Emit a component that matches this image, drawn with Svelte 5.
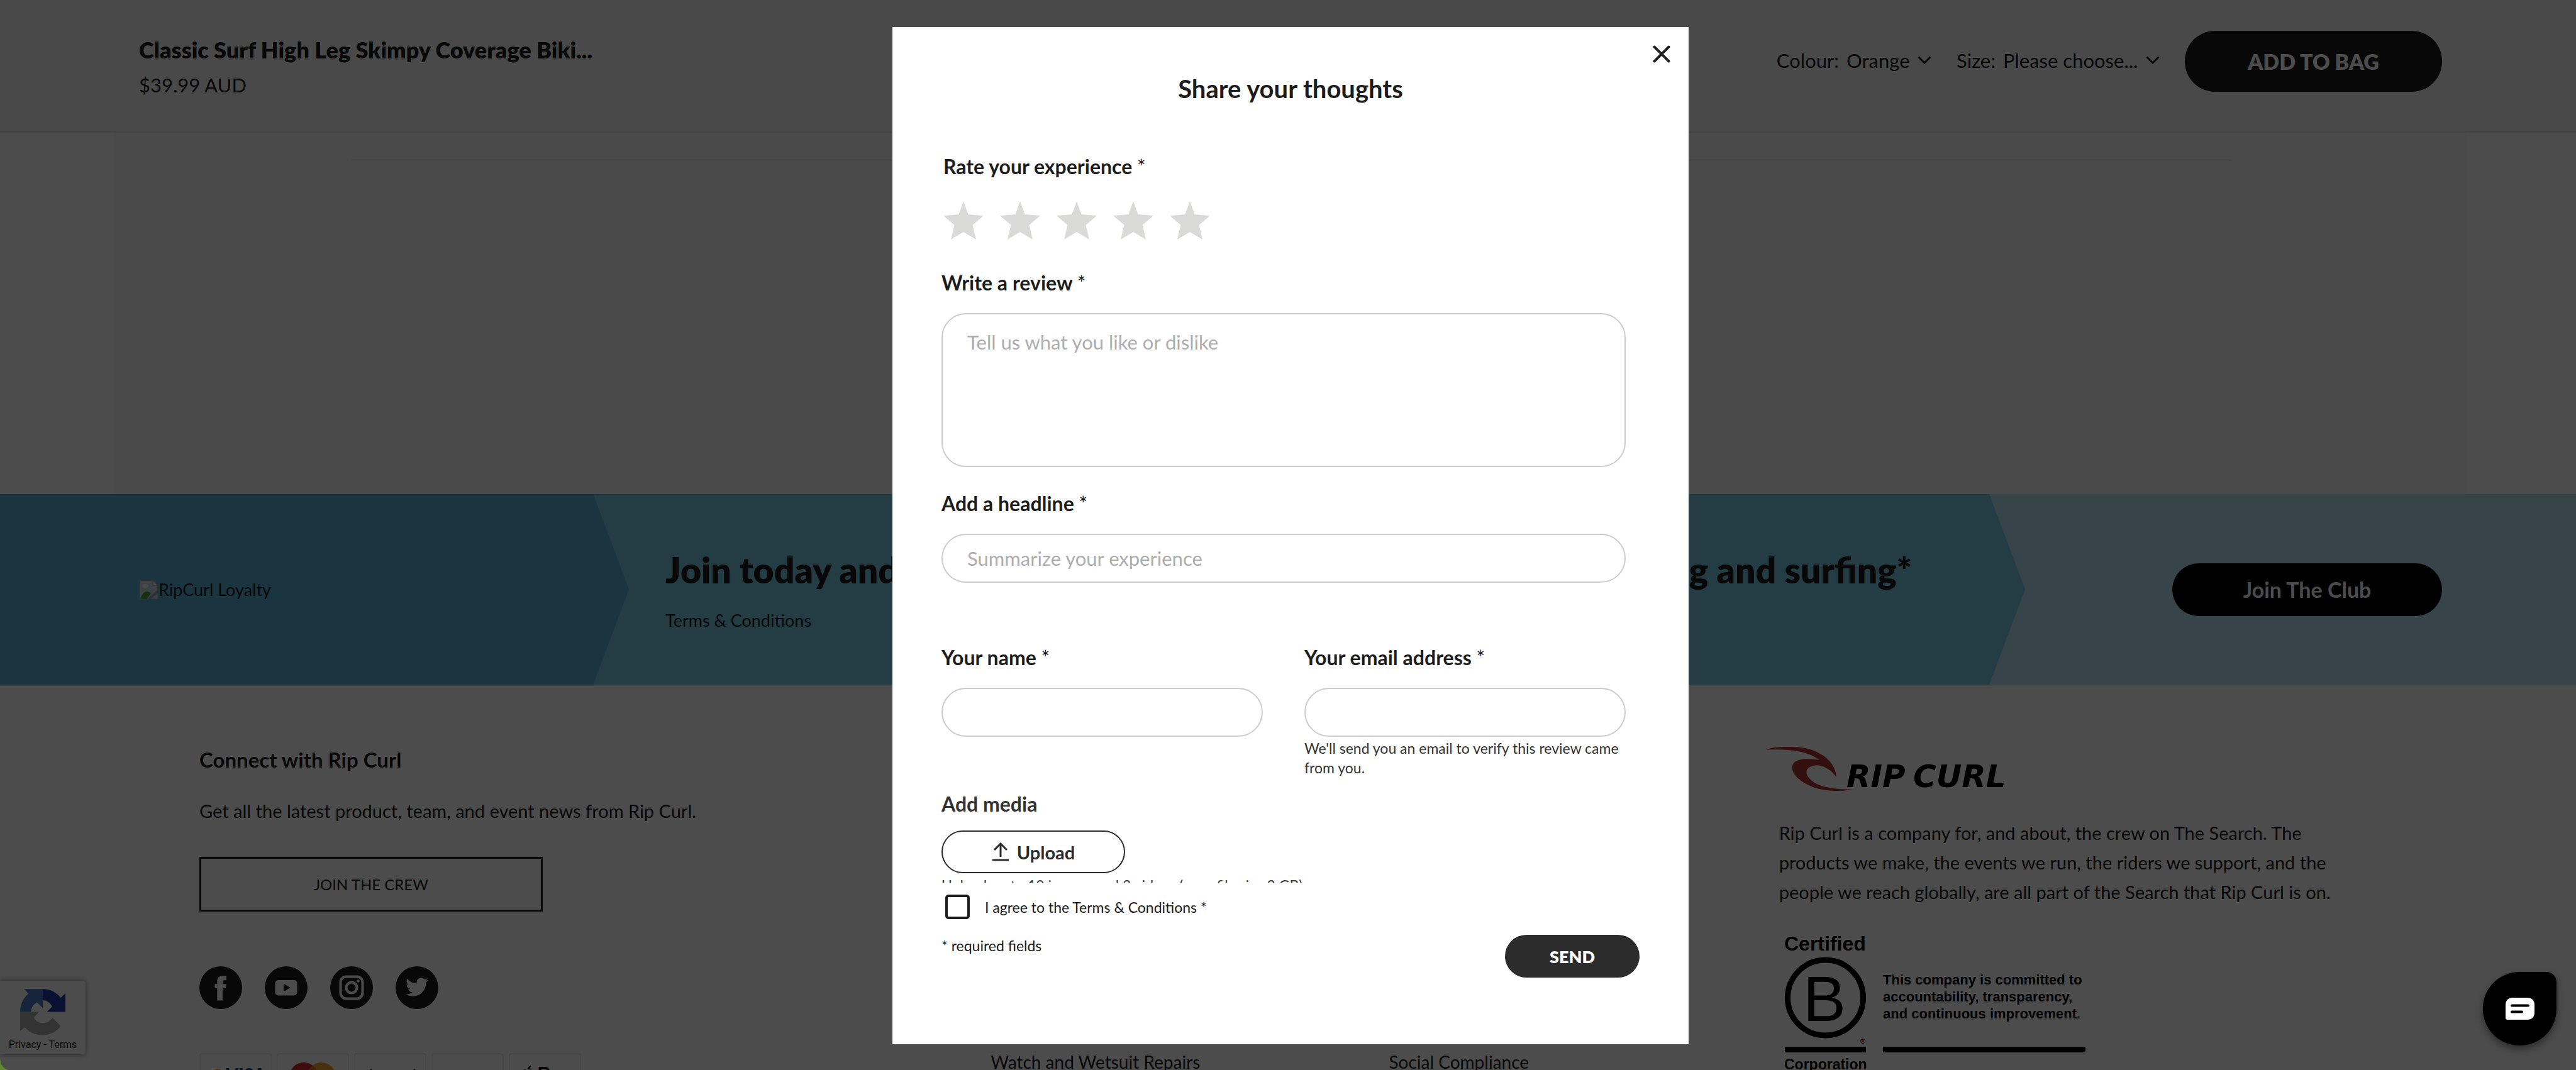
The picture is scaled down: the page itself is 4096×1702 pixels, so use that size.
<script>
  const stars = [1, 2, 3, 4, 5];
  let rating = $state(0);
</script>

<div class="page">
  <header class="product-bar">
    <div class="product">
      <h2>Classic Surf High Leg Skimpy Coverage Biki...</h2>
      <p>$39.99 AUD</p>
    </div>
    <div class="options">
      <div class="option">
        <label for="colour">Colour:</label>
        <select id="colour"><option>Orange</option></select>
        <svg width="22" height="13" viewBox="0 0 22 13" aria-hidden="true"><path d="M1.500 1.500L11 11L20.500 1.500" /></svg>
      </div>
      <div class="option">
        <label for="size">Size:</label>
        <select id="size"><option>Please choose...</option></select>
        <svg width="22" height="13" viewBox="0 0 22 13" aria-hidden="true"><path d="M1.500 1.500L11 11L20.500 1.500" /></svg>
      </div>
      <button class="pill bag" type="button">ADD TO BAG</button>
    </div>
  </header>

  <main class="content"><div class="content-inner"><hr /></div></main>

  <section class="banner">
    <div class="loyalty">
      <svg width="31" height="32" viewBox="0 0 31 32" aria-hidden="true">
        <path d="M1 1H22L30 9V17L14 31H1Z" fill="#c9d8ee" stroke="#a8a8a8" stroke-width="2" />
        <path d="M22 1V9H30Z" fill="#fff" stroke="#a8a8a8" stroke-width="1.500" />
        <ellipse cx="10" cy="10" rx="5" ry="3" fill="#fff" />
        <path d="M2 30C6 20 12 15 19 22L12 31Z" fill="#4da338" />
        <path d="M18 31H30V21Z" fill="#c9d8ee" stroke="#a8a8a8" />
      </svg>
      <span>RipCurl Loyalty</span>
    </div>
    <div class="join">
      <h2><span>Join today and</span><span>skating and surfing*</span></h2>
      <a href="#terms">Terms &amp; Conditions</a>
    </div>
    <div class="club"><button class="pill" type="button">Join The Club</button></div>
  </section>

  <footer class="footer">
    <div class="connect">
      <h3>Connect with Rip Curl</h3>
      <p>Get all the latest product, team, and event news from Rip Curl.</p>
      <button type="button" class="crew">JOIN THE CREW</button>
      <div class="social">
        <a href="#facebook" aria-label="Facebook">
          <svg viewBox="0 0 68 68"><circle cx="34" cy="34" r="34" /><path class="w" d="M28.300 54.500V35H24.500V28.300H28.300V24C28.300 18 32 15.300 37 15.300H43V22.300H39.500C37.500 22.300 37 23 37 25V28.300H43L42 35H37V54.500Z" /></svg>
        </a>
        <a href="#youtube" aria-label="YouTube">
          <svg viewBox="0 0 68 68"><circle cx="34" cy="34" r="34" /><rect class="w" x="16.500" y="22" width="35" height="24.500" rx="5" /><path d="M30 27.500V40.500L40.500 34Z" /></svg>
        </a>
        <a href="#instagram" aria-label="Instagram">
          <svg viewBox="0 0 68 68"><circle cx="34" cy="34" r="34" /><rect class="l" x="16.500" y="16.500" width="35" height="35" rx="9" /><circle class="l" cx="34" cy="34" r="8.500" /><circle class="w" cx="44.500" cy="23.500" r="2.300" /></svg>
        </a>
        <a href="#twitter" aria-label="Twitter">
          <svg viewBox="0 0 68 68"><circle cx="34" cy="34" r="34" /><path class="w" transform="translate(16 15) scale(1.5)" d="M23.953 4.570a10 10 0 01-2.825.775 4.958 4.958 0 002.163-2.723c-.951.555-2.005.959-3.127 1.184a4.920 4.920 0 00-8.384 4.482C7.690 8.095 4.067 6.130 1.640 3.162a4.822 4.822 0 00-.666 2.475c0 1.710.870 3.213 2.188 4.096a4.904 4.904 0 01-2.228-.616v.060a4.923 4.923 0 003.946 4.827 4.996 4.996 0 01-2.212.085 4.936 4.936 0 004.604 3.417 9.867 9.867 0 01-6.102 2.105c-.390 0-.779-.023-1.170-.067a13.995 13.995 0 007.557 2.209c9.053 0 13.998-7.496 13.998-13.985 0-.210 0-.420-.015-.630A9.935 9.935 0 0024 4.590z" /></svg>
        </a>
      </div>
      <div class="payments">
        <svg viewBox="0 0 115 76" role="img" aria-label="Visa"><rect class="card" x="1" y="1" width="113" height="74" rx="3" /><path d="M23 25H33L36 32Z" fill="#f0a52c" /><text x="41" y="46" class="visa">VISA</text></svg>
        <svg viewBox="0 0 115 76" role="img" aria-label="Mastercard"><rect class="card" x="1" y="1" width="113" height="74" rx="3" /><circle cx="71" cy="38" r="23" fill="#f0a52c" /><circle cx="43" cy="38" r="23" fill="#cf2929" /><path d="M57 20A23 23 0 0 1 57 56A23 23 0 0 1 57 20" fill="#e0702a" /></svg>
        <svg viewBox="0 0 115 76" role="img" aria-label="Afterpay"><rect class="card" x="1" y="1" width="113" height="74" rx="3" /><path d="M25 27L27 25L29 27ZM94 27L96 25L98 27Z" fill="#333" /></svg>
        <svg viewBox="0 0 115 76" role="img" aria-label="Zip"><rect class="card" x="1" y="1" width="113" height="74" rx="3" /></svg>
        <svg viewBox="0 0 115 76" role="img" aria-label="Apple Pay"><rect class="card" x="1" y="1" width="113" height="74" rx="3" /><path d="M30 26C30 23 32 21 35 20C35 23 33 26 30 26ZM20 34C20 24 28 26 30 28C33 26 37 26 39 29C33 32 35 39 40 41C37 50 33 48 30 47C26 49 20 45 20 34Z" fill="#000" /><text x="45" y="47" class="apple">Pay</text></svg>
      </div>
    </div>
    <nav class="links" aria-label="Support"><a href="#repairs">Watch and Wetsuit Repairs</a></nav>
    <nav class="links" aria-label="Company"><a href="#social-compliance">Social Compliance</a></nav>
    <div class="about">
      <svg class="logo" width="390" height="70" viewBox="0 0 390 70" role="img" aria-label="Rip Curl">
        <path d="M0 4.500C12 0 24 0 38 0C58 0 74 3 88 12C102 20 111 33 112 48C102 35 88 27 75 30C66 32 62 38 66 46C74 60 96 68 137 67.500C126 70 118 70 108 70C84 69 64 62 51 50C42 42 39 32 44 26C50 18 70 18 85 21C68 8 44 3 0 4.500Z" fill="#b03434" />
        <text x="128" y="64">RIP</text><text x="234" y="64">CURL</text>
      </svg>
      <p>Rip Curl is a company for, and about, the crew on The Search. The products we make, the events we run, the riders we support, and the people we reach globally, are all part of the Search that Rip Curl is on.</p>
      <svg class="bcorp" width="480" height="224" viewBox="0 0 480 224" role="img" aria-label="Certified B Corporation">
        <text x="-1" y="29" font-size="32">Certified</text>
        <circle cx="64.500" cy="104" r="60" />
        <text x="29" y="141" font-size="102" font-weight="400">B</text>
        <text x="120" y="177" font-size="11">®</text>
        <rect x="0" y="182" width="129" height="9" /><rect x="156" y="182" width="322" height="9" />
        <text x="156" y="83" font-size="22">This company is committed to</text>
        <text x="156" y="110" font-size="22">accountability, transparency,</text>
        <text x="156" y="137" font-size="22">and continuous improvement.</text>
        <text x="-1" y="218" font-size="23">Corporation</text>
      </svg>
    </div>
  </footer>

  <aside class="captcha">
    <svg width="72" height="74" viewBox="100 75 220 225" aria-hidden="true">
      <path d="M120 75H210V167L182 140C165 148 153 166 153 186H100C100 150 114 120 140 98Z" fill="#4a78c8" />
      <path d="M210 75C247 75 278 92 298 118L320 95V186H230L256 160C245 140 230 130 210 130Z" fill="#1c3aa9" />
      <path d="M100 186H192L166 214C176 232 192 240 210 240C232 240 248 230 258 215L297 255C276 284 244 299 210 299C174 299 144 286 122 260L100 280Z" fill="#ababab" />
    </svg>
    <span>Privacy - Terms</span>
  </aside>
</div>

<div class="overlay">
  <div class="dialog" role="dialog" aria-modal="true" aria-labelledby="dialog-title">
    <button class="close" type="button" aria-label="Close">
      <svg width="28" height="28" viewBox="0 0 28 28"><path d="M2.500 2.500L25.500 25.500M25.500 2.500L2.500 25.500" /></svg>
    </button>
    <h1 id="dialog-title">Share your thoughts</h1>
    <form>
      <div class="fields">
        <div class="rating" role="group" aria-labelledby="rate">
          <span class="label" id="rate">Rate your experience <i>*</i></span>
          <div class="stars">
            {#each stars as n}
              <button type="button" aria-label="{n} of 5 stars" class:on={n <= rating} onclick={() => (rating = n)}>
                <svg width="64" height="61" viewBox="0 0 64 61"><path d="M32 0L39.500 21L64 23L46.500 38L52 61L32 49L12 61L17.500 38L0 23L24.500 21Z" /></svg>
              </button>
            {/each}
          </div>
        </div>
        <label class="label review-label" for="review">Write a review <i>*</i></label>
        <textarea id="review" placeholder="Tell us what you like or dislike"></textarea>
        <label class="label headline-label" for="headline">Add a headline <i>*</i></label>
        <input id="headline" type="text" placeholder="Summarize your experience" />
        <div class="pair">
          <div>
            <label class="label" for="name">Your name <i>*</i></label>
            <input id="name" type="text" />
          </div>
          <div>
            <label class="label" for="email">Your email address <i>*</i></label>
            <input id="email" type="email" />
            <p class="small">We'll send you an email to verify this review came from you.</p>
          </div>
        </div>
        <span class="label media-label">Add media</span>
        <button class="upload" type="button">
          <svg width="28" height="30" viewBox="0 0 28 30" aria-hidden="true"><path d="M14 23V2M4 12L14 2L24 12M1 28H27" /></svg>
          Upload
        </button>
        <p class="small hint">Upload up to 10 images and 3 videos (max. file size 2 GB)</p>
      </div>
      <div class="actions">
        <label class="agree"><input type="checkbox" /><span>I agree to the Terms &amp; Conditions *</span></label>
        <div class="submit-row">
          <span>* required fields</span>
          <button class="send" type="submit">SEND</button>
        </div>
      </div>
    </form>
  </div>
</div>

<button class="chat" type="button" aria-label="Chat">
  <svg width="46" height="35" viewBox="0 0 46 35"><path d="M12 0H34Q46 0 46 12V23Q46 35 34 35H3Q0 35 0 32V12Q0 0 12 0Z" fill="#fff" /><path d="M10 12.500H36M10 22.500H26" stroke="#000" stroke-width="4" stroke-linecap="round" /></svg>
</button>
<svg class="corner" width="14" height="18" viewBox="0 0 14 18" aria-hidden="true"><path d="M0 0C1 10 5 16 14 18H0Z" fill="#5c8c2e" /></svg>

<style>
  :global(body) { margin: 0; overflow: hidden; font-family: Lato, 'Open Sans', sans-serif; color: #1c1c1c; }
  h1, h2, h3, p { margin: 0; }
  button, input, textarea, select { font-family: inherit; color: inherit; box-sizing: border-box; }
  button { border: 0; padding: 0; background: none; cursor: pointer; }
  a { color: inherit; text-decoration: none; }
  svg { display: block; flex: none; }

  .page { position: relative; isolation: isolate; height: 100vh; overflow: hidden; background: #fff; display: flex; flex-direction: column; }
  .product-bar { flex: none; display: flex; justify-content: space-between; align-items: flex-start; height: 160px; padding: 49px 213px 0 221px; background: #f4f4f4; border-bottom: 2px solid #dcdcdc; }
  .product { padding-top: 8px; display: grid; gap: 14px; }
  .product h2 { font-size: 36px; line-height: 44px; font-weight: 800; }
  .product p { font-size: 31px; line-height: 40px; }
  .options { display: flex; align-items: center; gap: 40px; font-size: 31px; }
  .option { display: flex; align-items: center; gap: 12px; padding-bottom: 4px; }
  .option select { appearance: none; border: 0; padding: 0; background: none; font-size: 31px; line-height: 40px; }
  .option path { fill: none; stroke: #1c1c1c; stroke-width: 3; }
  .pill { width: 429px; height: 84px; border-radius: 42px; background: #000; color: #fff; font-size: 34px; font-weight: 700; }
  .bag { width: 409px; height: 97px; border-radius: 48px; background: #1c1c1c; font-weight: 800; }

  .content { flex: none; height: 575px; padding: 0 174px 0 182px; display: flex; }
  .content-inner { flex: 1; background: #f7f7f7; }
  .content hr { height: 3px; border: 0; margin: 42px 374px 0 376px; background: #eaeaea; }

  .banner { flex: none; height: 303px; display: grid; grid-template-columns: 1000fr 2220fr 876fr; background: #b7e3f3; border-bottom: 2px solid #ededed; }
  .loyalty, .join { clip-path: polygon(0 0, calc(100% - 57px) 0, 100% 50%, calc(100% - 57px) 100%, 0 100%); }
  .loyalty { z-index: 1; display: flex; align-items: center; padding-left: 221px; background: #57b1d3; font-size: 27px; }
  .join { margin-left: -57px; padding: 89px 180px 0 115px; background: #78c8df; display: flex; flex-direction: column; gap: 32px; }
  .join h2 { display: flex; justify-content: space-between; font-size: 57px; line-height: 62px; font-weight: 800; }
  .join a { font-size: 27px; line-height: 36px; }
  .club { display: flex; align-items: center; justify-content: flex-end; padding-right: 213px; }

  .footer { flex: none; display: grid; grid-template-columns: 1258fr 633fr 599fr 1288fr; padding: 97px 0 0 317px; font-size: 29px; line-height: 47px; }
  .footer h3 { font-size: 33px; line-height: 40px; }
  .connect p { margin: 38px 0 50px; }
  .crew { display: block; width: 546px; height: 87px; border: 3px solid #1c1c1c; font-size: 24px; font-weight: 400; }
  .social { display: flex; gap: 36px; margin: 87px 0 70px; }
  .social svg { width: 68px; height: 68px; fill: #1c1c1c; }
  .social .w { fill: #fff; }
  .social .l { fill: none; stroke: #fff; stroke-width: 4; }
  .payments { display: flex; gap: 8px; }
  .payments svg { width: 115px; height: 76px; }
  .card { fill: none; stroke: #dcdcdc; stroke-width: 1; }
  .visa { font: italic 900 30px Lato, sans-serif; fill: #1a3f8f; }
  .apple { font: 500 34px Inter, sans-serif; fill: #000; }
  .links { padding-top: 477px; }
  .links a { font-size: 28px; }
  .logo text { font: italic 700 50px 'DejaVu Sans', sans-serif; }
  .about p { margin: 43px 0 41px 21px; width: 910px; }
  .bcorp { margin-left: 30px; font-family: 'Liberation Sans', sans-serif; font-weight: 700; }
  .bcorp circle { fill: none; stroke: #000; stroke-width: 9; }

  .captcha { position: absolute; left: 0; bottom: 25px; width: 136px; height: 117px; box-sizing: border-box; padding-top: 13px; display: flex; flex-direction: column; align-items: center; gap: 4px; background: #fff; border-radius: 0 4px 4px 0; box-shadow: 0 0 8px #808080; font: 16px/22px Roboto, sans-serif; }

  .overlay { position: fixed; inset: 0; padding: 43px 0 41px 8px; background: rgba(0, 0, 0, 0.7); display: flex; justify-content: center; }
  .dialog { position: relative; width: 1266px; background: #fff; padding-top: 76px; box-sizing: border-box; display: flex; flex-direction: column; }
  .dialog h1 { font-size: 40px; line-height: 44px; text-align: center; }
  .close { position: absolute; top: 13px; right: 13px; width: 60px; height: 60px; display: grid; place-items: center; }
  .close path { fill: none; stroke: #1c1c1c; stroke-width: 4; stroke-linecap: round; }
  form { flex: 1; min-height: 0; display: flex; flex-direction: column; }
  .fields { flex: 1; min-height: 0; overflow: hidden; padding: 84px 100px 0 78px; }
  .label { display: block; font-size: 32px; line-height: 36px; font-weight: 700; }
  .label i { font-style: normal; font-weight: 400; }
  .rating { padding-left: 3px; }
  .stars { display: flex; gap: 26px; margin-top: 37px; }
  .stars path { fill: #dadad8; }
  .stars .on path { fill: #1c1c1c; }
  .review-label { margin: 51px 0 30px; }
  .headline-label { margin: 40px 0 30px; }
  .fields input, .fields textarea { display: block; width: 100%; height: 78px; border: 2px solid #ccc; border-radius: 39px; background: #fff; padding: 0 39px; font-size: 31px; line-height: 36px; outline: 0; }
  .fields textarea { height: 245px; padding: 26px 39px; resize: none; }
  ::placeholder { color: #adadad; opacity: 1; }
  .pair { display: grid; grid-template-columns: 1fr 1fr; gap: 66px; margin-top: 101px; }
  .pair .label { margin-bottom: 30px; }
  .small { font-size: 23px; line-height: 31px; color: #333; }
  .pair .small { margin-top: 3px; }
  .media-label { margin: 24px 0; color: #333; }
  .upload { width: 292px; height: 68px; border: 2px solid #2c2c2c; border-radius: 34px; display: flex; align-items: center; justify-content: center; gap: 12px; font-size: 29px; font-weight: 700; color: #2c2c2c; }
  .upload path { fill: none; stroke: #2c2c2c; stroke-width: 3; }
  .hint { margin-top: 4px; }
  .actions { flex: none; padding: 19px 78px 106px; font-size: 23px; }
  .agree { display: flex; align-items: center; gap: 24px; padding-left: 6px; }
  .agree input { appearance: none; width: 39px; height: 39px; margin: 0; border: 4px solid #1c1c1c; border-radius: 5px; }
  .submit-row { display: flex; justify-content: space-between; align-items: flex-start; margin-top: 25px; line-height: 34px; }
  .send { width: 214px; height: 68px; border-radius: 34px; background: #2c2c2c; color: #fff; font-size: 27px; font-weight: 800; }

  .chat { position: fixed; right: 31px; bottom: 39px; width: 117px; height: 117px; border-radius: 58px 16px 58px 58px; background: #000; display: grid; place-items: center; box-shadow: 0 6px 12px rgba(0, 0, 0, 0.4); }
  .corner { position: fixed; left: 0; bottom: 0; }
</style>
